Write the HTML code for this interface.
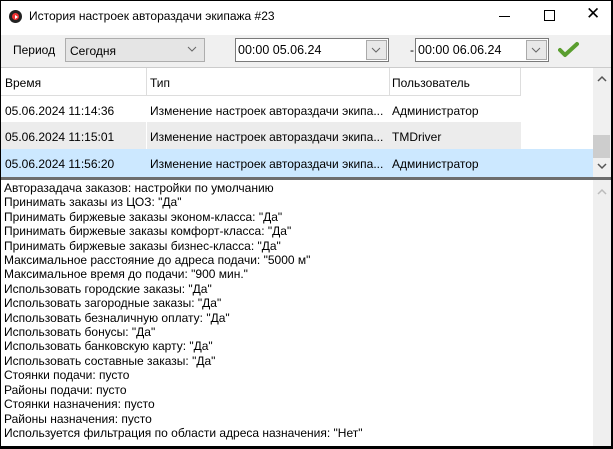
<!DOCTYPE html>
<html><head><meta charset="utf-8"><style>
*{margin:0;padding:0;box-sizing:border-box}
body{width:613px;height:449px;overflow:hidden;background:#000;font-family:"Liberation Sans","DejaVu Sans",sans-serif;font-size:12px;color:#000;position:relative}
.a{position:absolute}
#win{left:1px;top:1px;width:610px;height:445px;background:#fff;overflow:hidden}
.t{white-space:nowrap}
</style></head><body>
<div id="win" class="a">
 <div class="a" style="left:0;top:0;width:610px;height:34px;background:#fff"></div>
 <div class="a" style="left:8px;top:9px;width:13px;height:13px;border-radius:50%;background:#222"></div>
 <div class="a" style="left:11px;top:12px;width:7px;height:7px;border-radius:50%;background:#e33"></div>
 <div class="a" style="left:13.5px;top:13.5px;width:0;height:0;border-left:3px solid #fff;border-top:2px solid transparent;border-bottom:2px solid transparent"></div>
 <div class="a t" style="left:28px;top:8px;font-size:12px">История настроек автораздачи экипажа #23</div>
 <div class="a" style="left:498px;top:15px;width:11px;height:1px;background:#000"></div>
 <div class="a" style="left:543px;top:9px;width:11px;height:11px;border:1px solid #000"></div>
 <div class="a t" style="left:585px;top:3px;font-size:17px;font-weight:300">✕</div>
 <div class="a" style="left:0;top:34px;width:610px;height:32px;background:#f0f0f0"></div>
 <div class="a t" style="left:12px;top:42px">Период</div>
 <div class="a" style="left:64px;top:37px;width:140px;height:24px;background:#e5e5e5;border:1px solid #adadad"></div>
 <div class="a t" style="left:69px;top:43px">Сегодня</div>
 <svg class="a" style="left:186px;top:45px" width="10" height="7"><path d="M1 1l4 4 4-4" fill="none" stroke="#666"/></svg>
 <div class="a" style="left:234px;top:37px;width:154px;height:24px;background:#fff;border:1px solid #7a7a7a"></div>
 <div class="a t" style="left:237px;top:42px;font-size:12.5px">00:00 05.06.24</div>
 <div class="a" style="left:365px;top:39px;width:21px;height:20px;background:#e8e8e8;border:1px solid #aaa"></div>
 <svg class="a" style="left:370px;top:46px" width="10" height="7"><path d="M1 1l4 4 4-4" fill="none" stroke="#666"/></svg>
 <div class="a t" style="left:409px;top:42px">-</div>
 <div class="a" style="left:414px;top:37px;width:134px;height:24px;background:#fff;border:1px solid #7a7a7a"></div>
 <div class="a t" style="left:417px;top:42px;font-size:12.5px">00:00 06.06.24</div>
 <div class="a" style="left:525px;top:39px;width:21px;height:20px;background:#e8e8e8;border:1px solid #aaa"></div>
 <svg class="a" style="left:530px;top:46px" width="10" height="7"><path d="M1 1l4 4 4-4" fill="none" stroke="#666"/></svg>
 <svg class="a" style="left:557px;top:40px" width="22" height="18"><path d="M2 9l5 5L19 3" fill="none" stroke="#5a9e2f" stroke-width="4" stroke-linecap="round" stroke-linejoin="round"/></svg>
 <div class="a" style="left:0;top:66px;width:610px;height:110px;background:#fff;border-top:1px solid #ccc"></div>
 <div class="a" style="left:0;top:67px;width:520px;height:28px;background:#fff;border-bottom:1px solid #ddd;border-right:1px solid #ddd"></div>
 <div class="a" style="left:145px;top:67px;width:1px;height:28px;background:#ddd"></div>
 <div class="a" style="left:388px;top:67px;width:1px;height:28px;background:#ddd"></div>
 <div class="a t" style="left:4px;top:75px">Время</div>
 <div class="a t" style="left:149px;top:75px">Тип</div>
 <div class="a t" style="left:391px;top:75px">Пользователь</div>
 <div class="a" style="left:0;top:121px;width:520px;height:27px;background:#ececec"></div>
 <div class="a" style="left:145px;top:121px;width:1px;height:27px;background:#fff"></div>
 <div class="a" style="left:0;top:148px;width:592px;height:28px;background:#cce8ff"></div>
 <div class="a t" style="left:4px;top:103px">05.06.2024 11:14:36</div>
 <div class="a t" style="left:149px;top:103px">Изменение настроек автораздачи экипа...</div>
 <div class="a t" style="left:391px;top:103px">Администратор</div>
 <div class="a t" style="left:4px;top:129px">05.06.2024 11:15:01</div>
 <div class="a t" style="left:149px;top:129px">Изменение настроек автораздачи экипа...</div>
 <div class="a t" style="left:391px;top:129px">TMDriver</div>
 <div class="a t" style="left:4px;top:156px">05.06.2024 11:56:20</div>
 <div class="a t" style="left:149px;top:156px">Изменение настроек автораздачи экипа...</div>
 <div class="a t" style="left:391px;top:156px">Администратор</div>
 <div class="a" style="left:592px;top:67px;width:18px;height:109px;background:#f0f0f0"></div>
 <svg class="a" style="left:596px;top:74px" width="10" height="7"><path d="M1 6l4-4 4 4" fill="none" stroke="#555" stroke-width="1.5"/></svg>
 <svg class="a" style="left:596px;top:162px" width="10" height="7"><path d="M1 1l4 4 4-4" fill="none" stroke="#555" stroke-width="1.5"/></svg>
 <div class="a" style="left:592px;top:134px;width:17px;height:23px;background:#cdcdcd"></div>
 <div class="a" style="left:0;top:176px;width:610px;height:3px;background:#6d6d6d"></div>
 <div class="a" style="left:592px;top:179px;width:18px;height:266px;background:#efefef"></div>
 <svg class="a" style="left:596px;top:187px" width="10" height="7"><path d="M1 6l4-4 4 4" fill="none" stroke="#bbb" stroke-width="1.5"/></svg>
 <div class="a t" style="left:3px;top:180px;line-height:14.4px">
Авторазадача заказов: настройки по умолчанию<br>
Принимать заказы из ЦОЗ: "Да"<br>
Принимать биржевые заказы эконом-класса: "Да"<br>
Принимать биржевые заказы комфорт-класса: "Да"<br>
Принимать биржевые заказы бизнес-класса: "Да"<br>
Максимальное расстояние до адреса подачи: "5000 м"<br>
Максимальное время до подачи: "900 мин."<br>
Использовать городские заказы: "Да"<br>
Использовать загородные заказы: "Да"<br>
Использовать безналичную оплату: "Да"<br>
Использовать бонусы: "Да"<br>
Использовать банковскую карту: "Да"<br>
Использовать составные заказы: "Да"<br>
Стоянки подачи: пусто<br>
Районы подачи: пусто<br>
Стоянки назначения: пусто<br>
Районы назначения: пусто<br>
Используется фильтрация по области адреса назначения: "Нет"
 </div>
</div>
</body></html>
